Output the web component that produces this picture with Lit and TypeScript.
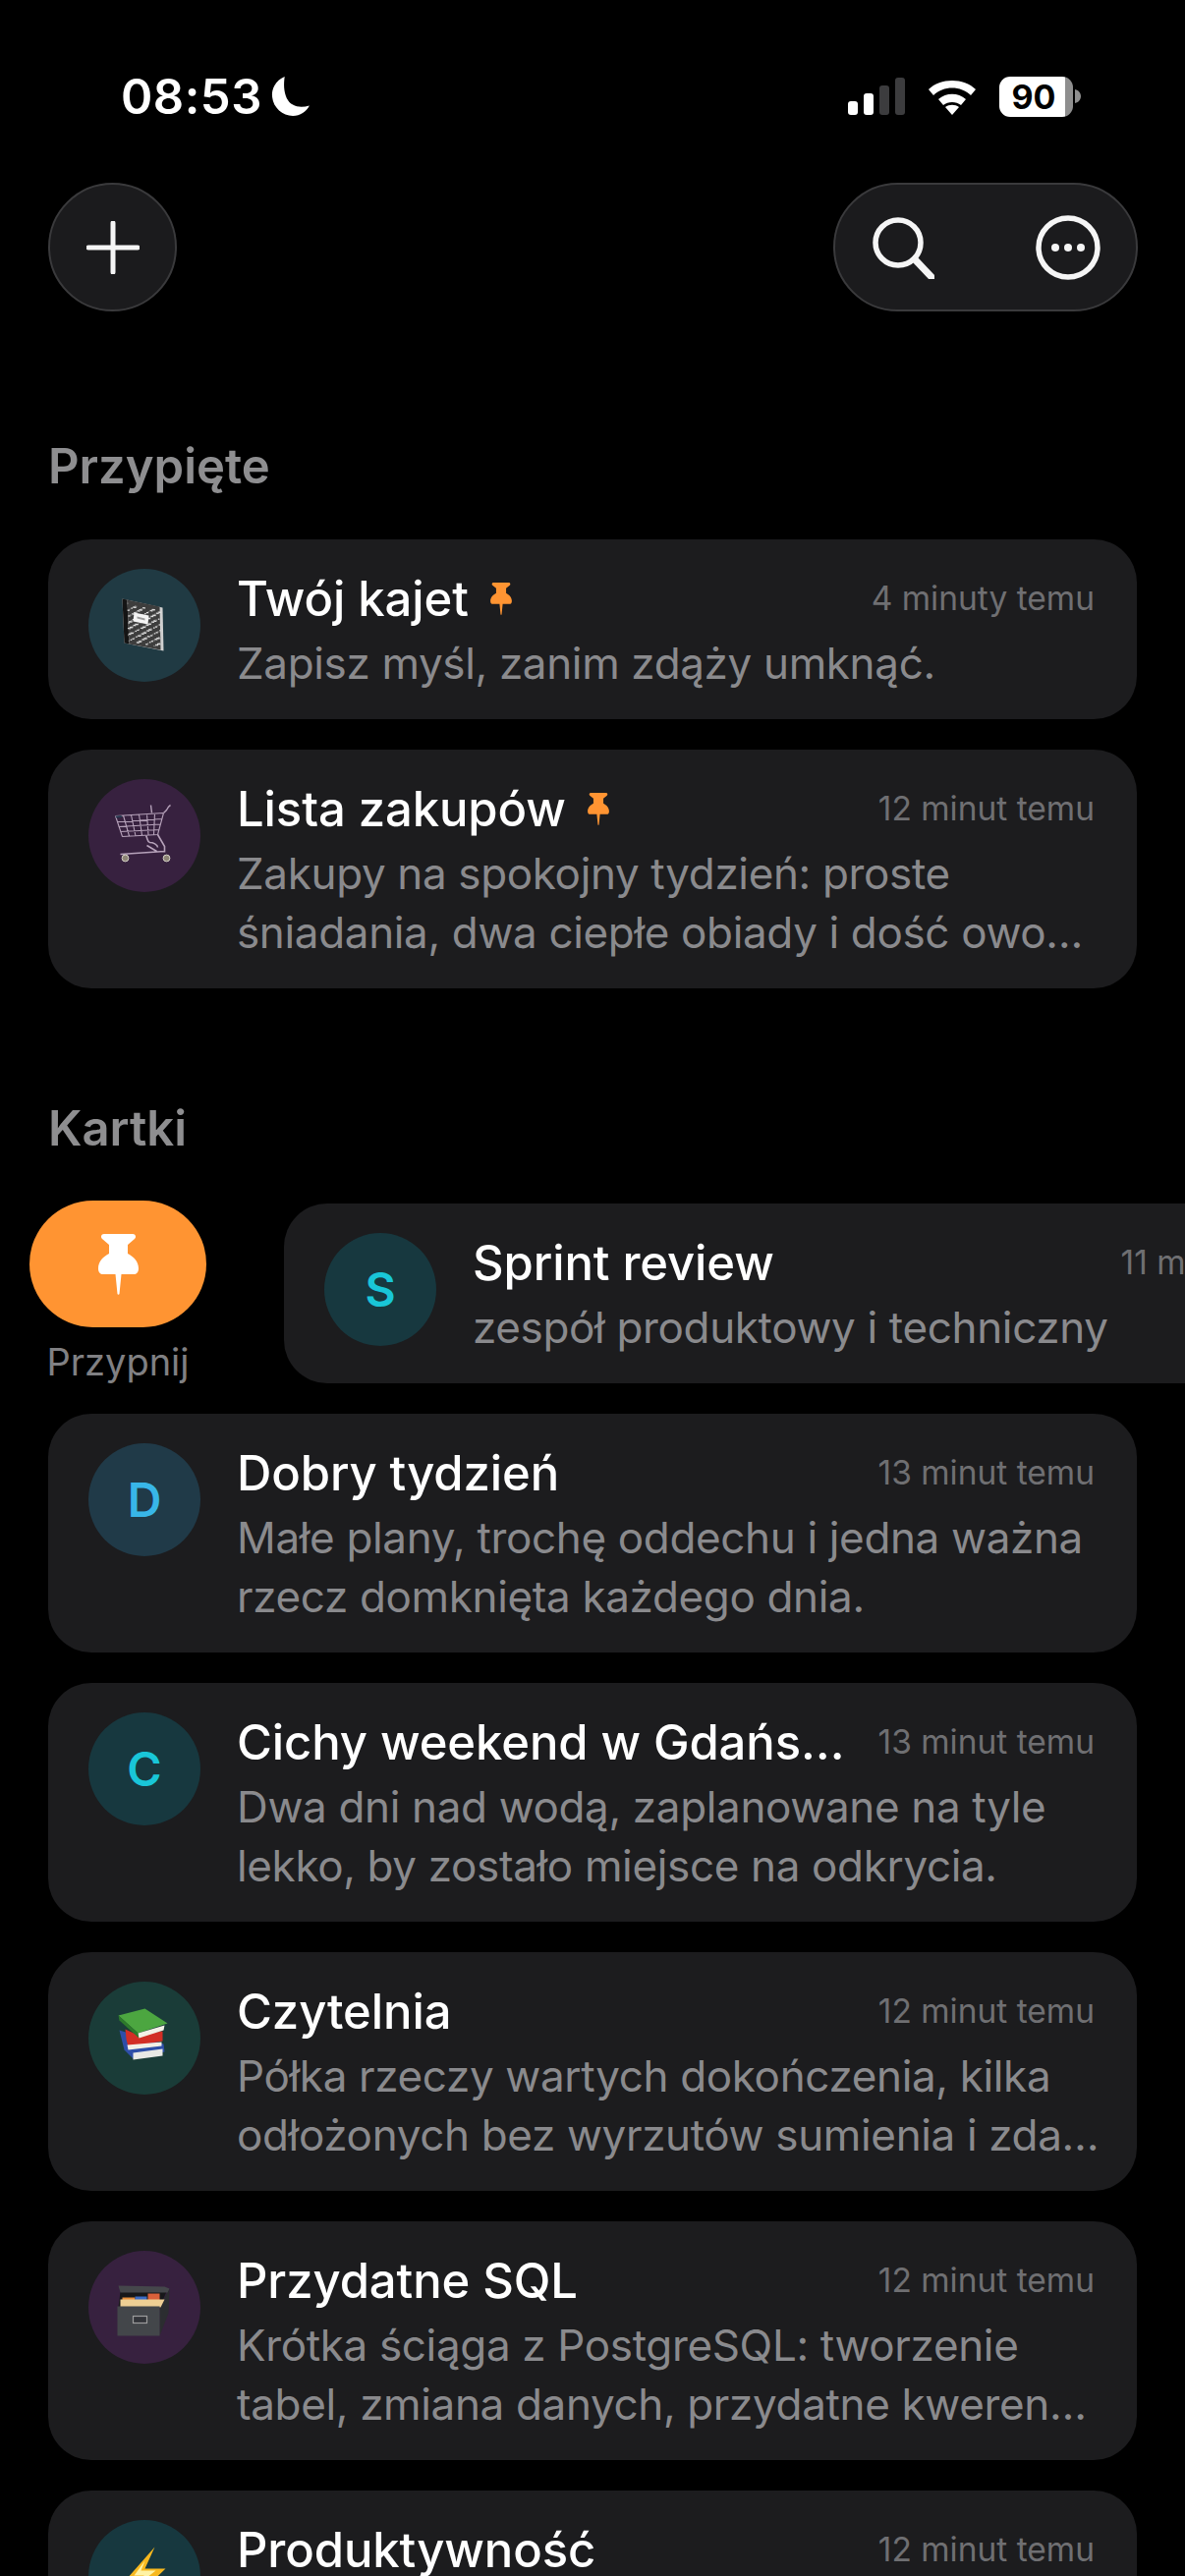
import { LitElement, html, css, svg } from 'lit';
import { customElement } from 'lit/decorators.js';

const pinPath =
  'M6 0H35c3 0 4 3 2 5l-7 6v9c6 3 11 8 11 15 0 4-2 6-5 6H23.500l-2 20c-.2 1-1.800 1-2 0l-2-20H5c-3 0-5-2-5-6 0-7 5-12 11-15v-9L4 5C2 3 3 0 6 0z';

// speckles for the marbled notebook cover, fixed sequence so it never changes between runs
const specks = Array.from({ length: 170 }, (_, i) => {
  const u = (i * 0.618034) % 1;
  const v = (i * 0.754878) % 1;
  const x = 19 + u * 33;
  const y = 14 + u * 8 + v * 38;
  const light = i % 3 !== 0;
  return svg`<rect x=${x} y=${y} width=${1 + (i % 3) * 0.6} height="1.300" fill=${light ? '#dcdcdc' : '#8a8a8a'} />`;
});

const notebook = svg`
  <path d="M14 10l41 9 1 44-40-8z" fill="#d0d0d0" />
  <path d="M14 10l5 1 2 45-5-1z" fill="#141414" />
  <path d="M19 11l33 7 1 44-32-6z" fill="#3d3d3d" />
  ${specks}
  <path d="M26 24l15 3-1 9-15-3z" fill="#f4f4f4" />
  <path d="M29 28l8 2v2l-8-2z" fill="#9b9b9b" />
`;

const cart = svg`
  <g fill="none" stroke="#b6a2ba" stroke-width="1.100">
    <path d="M7 17l49-3M9 23l45-3M10 28l43-2.500M12 33l39-2M14 38l36-2M7 17l7 21M56 14l-6 22M15 16.500l6 21M23 16l4.500 21.500M31 15.500l3 21.500M39 15l1.500 21.500M47 14.500l-1 22" />
    <path d="M56 14l3-3c1-2 2-4 4-5M43 6l1 8" stroke-width="1.400" />
    <path d="M38 37c2 3 1 6 4 7 3 0 8 2 8 5M50 36l7 12v6M12 56l45-3M39 47l10 6" stroke-width="1.600" />
  </g>
  <circle cx="17" cy="60" r="3.400" fill="#8d8576" stroke="#d5d0c7" stroke-width="1" />
  <circle cx="59" cy="60" r="3.400" fill="#8d8576" stroke="#d5d0c7" stroke-width="1" />
  <path d="M7 17l6-.5.800 2-6 .5z" fill="#27384f" />
`;

const books = svg`
  <path d="M9 27l5 20 9 9 32-7-1-8z" fill="#2e4ea8" />
  <path d="M23 50l30-4v7l-30 4z" fill="#e9e9e6" />
  <path d="M15 26l13 6 25-4v10l-35 6-2-8z" fill="#d22e25" />
  <path d="M17 42l35-3v4l-34 4z" fill="#f2efe6" />
  <path d="M8 12L35 5l23 15-30 10z" fill="#4ca640" />
  <path d="M8 12l20 18 1 5L9 17z" fill="#2d7a2a" />
  <path d="M28 30l27-8-1 5-25 8z" fill="#f3f1e6" />
`;

const cardBox = svg`
  <path d="M50 33l10-18-1 25-9 23z" fill="#2b2d30" />
  <path d="M10 18h47l-7 16H8z" fill="#17181a" />
  <path d="M8 12l47 1 5 2-2 4H10z" fill="#45474b" />
  <rect x="12" y="24" width="13" height="6" fill="#e98f3a" />
  <rect x="25" y="23" width="12" height="6" fill="#3b6bc4" />
  <rect x="38" y="20" width="12" height="7" fill="#d9603a" />
  <path d="M10 26h45l-4 8H10z" fill="#eecf94" />
  <rect x="7" y="33" width="43" height="30" fill="#43464a" />
  <rect x="23" y="43" width="14" height="7" fill="#33353a" stroke="#9c9c9c" stroke-width="1.200" />
`;

const bolt = svg`
  <path d="M45 11L16 44h14l-6 20L56 33H35z" fill="#f7b81f" />
  <path d="M35 25L24 40h10l-2 6 14-11H31z" fill="#fff3a6" />
`;

type Note = {
  title: string;
  time: string;
  lines: string[];
  tint: string;
  letter?: string;
  letterColor?: string;
  art?: unknown;
  box?: string;
  pinned?: boolean;
};

const pinned: Note[] = [
  {
    title: 'Twój kajet',
    time: '4 minuty temu',
    lines: ['Zapisz myśl, zanim zdąży umknąć.'],
    tint: '#203a43',
    art: notebook,
    box: '1.5 2.5 70 70',
    pinned: true,
  },
  {
    title: 'Lista zakupów',
    time: '12 minut temu',
    lines: ['Zakupy na spokojny tydzień: proste', 'śniadania, dwa ciepłe obiady i dość owo…'],
    tint: '#37213f',
    art: cart,
    box: '1.5 2.5 70 70',
    pinned: true,
  },
];

const cards: Note[] = [
  {
    title: 'Dobry tydzień',
    time: '13 minut temu',
    lines: ['Małe plany, trochę oddechu i jedna ważna', 'rzecz domknięta każdego dnia.'],
    tint: '#203a48',
    letter: 'D',
    letterColor: '#38b6e8',
  },
  {
    title: 'Cichy weekend w Gdańs…',
    time: '13 minut temu',
    lines: ['Dwa dni nad wodą, zaplanowane na tyle', 'lekko, by zostało miejsce na odkrycia.'],
    tint: '#17383f',
    letter: 'C',
    letterColor: '#19c6d8',
  },
  {
    title: 'Czytelnia',
    time: '12 minut temu',
    lines: ['Półka rzeczy wartych dokończenia, kilka', 'odłożonych bez wyrzutów sumienia i zda…'],
    tint: '#1a3c38',
    art: books,
    box: '-.5 .5 70 70',
  },
  {
    title: 'Przydatne SQL',
    time: '12 minut temu',
    lines: ['Krótka ściąga z PostgreSQL: tworzenie', 'tabel, zmiana danych, przydatne kweren…'],
    tint: '#37213f',
    art: cardBox,
    box: '-.5 -.5 70 70',
  },
  {
    title: 'Produktywność',
    time: '12 minut temu',
    lines: [''],
    tint: '#17383f',
    art: bolt,
    box: '-.5 6.5 70 70',
  },
];

@customElement('app-root')
export class AppRoot extends LitElement {
  static styles = css`
    :host {
      display: block;
      width: 1206px;
      height: 2622px;
      overflow: hidden;
      background: #000;
      color: #fff;
      font-family: Inter, 'Noto Sans', sans-serif;
    }

    .status {
      display: flex;
      justify-content: space-between;
      align-items: center;
      height: 60px;
      padding: 68px 106px 0 123px;
    }
    .clock {
      display: flex;
      align-items: center;
      gap: 8px;
      font-size: 49px;
      font-weight: 600;
      letter-spacing: 0.5px;
    }
    .sys {
      display: flex;
      align-items: center;
      gap: 23px;
    }
    .battery {
      display: flex;
      align-items: center;
      gap: 2px;
    }
    .battery-body {
      width: 75px;
      height: 41px;
      border-radius: 11px;
      background: linear-gradient(90deg, #fff 90%, #8e8e8e 90%);
      color: #000;
      font-size: 34px;
      font-weight: 700;
      line-height: 41px;
      text-align: center;
      padding-right: 5px;
      box-sizing: border-box;
    }

    .toolbar {
      display: flex;
      justify-content: space-between;
      padding: 58px 48px 0 49px;
    }
    .glass {
      display: flex;
      align-items: center;
      justify-content: center;
      height: 131px;
      border-radius: 66px;
      background: #1b1b1d;
      border: 2px solid #3a3a3c;
      box-sizing: border-box;
    }
    .glass.round {
      width: 131px;
    }
    .glass.pill {
      width: 310px;
      gap: 103px;
    }

    .label {
      font-size: 49px;
      font-weight: 600;
      color: #8e8e90;
      line-height: 60px;
      padding-left: 49px;
    }
    .label.first {
      margin-top: 128px;
    }
    .label.second {
      margin-top: 113px;
    }
    .stack {
      display: flex;
      flex-direction: column;
      gap: 31px;
      margin-top: 44px;
    }
    .stack.tight {
      margin-top: 46px;
    }

    .card {
      display: flex;
      gap: 37px;
      box-sizing: border-box;
      width: 1108px;
      margin-left: 49px;
      padding: 30px 43px 0 41px;
      border-radius: 44px;
      background: #1c1c1e;
      flex: none;
    }
    .card.lines-1 {
      height: 183px;
    }
    .card.lines-2 {
      height: 243px;
    }
    .avatar {
      flex: none;
      display: flex;
      align-items: center;
      justify-content: center;
      width: 114px;
      height: 115px;
      border-radius: 50%;
      font-size: 48px;
      font-weight: 600;
    }
    .body {
      flex: 1;
      min-width: 0;
    }
    .head {
      display: flex;
      align-items: center;
      justify-content: space-between;
      height: 60px;
    }
    .title {
      display: flex;
      align-items: center;
      gap: 22px;
      font-size: 49px;
      font-weight: 500;
      letter-spacing: -0.1px;
      white-space: nowrap;
    }
    .time {
      font-size: 33.500px;
      color: #6f6f72;
      white-space: nowrap;
    }
    .lines {
      margin-top: 6px;
    }
    .text {
      font-size: 44px;
      line-height: 60px;
      letter-spacing: -0.35px;
      color: #8a8a8d;
      white-space: nowrap;
    }

    .swipe {
      display: flex;
      align-items: flex-start;
    }
    .action {
      flex: none;
      display: flex;
      flex-direction: column;
      align-items: center;
      width: 180px;
      margin-left: 30px;
      margin-top: -3px;
    }
    .action-btn {
      display: flex;
      align-items: center;
      justify-content: center;
      width: 100%;
      height: 129px;
      border-radius: 65px;
      background: #ff9432;
    }
    .action-label {
      font-size: 38px;
      line-height: 42px;
      margin-top: 14px;
      color: #808083;
    }
    .swipe .card {
      margin-left: 79px;
    }
  `;

  private pin(w: number, h: number, fill: string) {
    return html`<svg width=${w} height=${h} viewBox="0 0 41 62">
      <path d=${pinPath} fill=${fill} />
    </svg>`;
  }

  private note(n: Note) {
    return html`
      <div class="card lines-${n.lines.length}">
        <div class="avatar" style="background:${n.tint};color:${n.letterColor ?? '#fff'}">
          ${n.letter ?? html`<svg width="70" height="70" viewBox=${n.box ?? '0 0 70 70'}>${n.art}</svg>`}
        </div>
        <div class="body">
          <div class="head">
            <div class="title">${n.title}${n.pinned ? this.pin(22, 33, '#ff9432') : ''}</div>
            <div class="time">${n.time}</div>
          </div>
          <div class="lines">${n.lines.map((l) => html`<div class="text">${l}</div>`)}</div>
        </div>
      </div>
    `;
  }

  render() {
    return html`
      <div class="status">
        <div class="clock">
          08:53
          <svg width="42" height="42" viewBox="0 0 40 40">
            <path d="M14 1C5 5 1 13 2 21c1 10 10 18 20 18 7 0 13-4 16-10-9 3-18 1-22-7-3-7-3-14-2-21z" fill="#fff" />
          </svg>
        </div>
        <div class="sys">
          <svg width="58" height="38" viewBox="0 0 58 38">
            <rect x="0" y="24" width="10" height="14" rx="3" fill="#fff" />
            <rect x="16" y="16" width="10" height="22" rx="3" fill="#fff" />
            <rect x="32" y="8" width="10" height="30" rx="3" fill="#3c3c3e" />
            <rect x="48" y="0" width="10" height="38" rx="3" fill="#3c3c3e" />
          </svg>
          <svg width="50" height="38" viewBox="0 0 50 38">
            <path d="M1 12C13 0 37 0 49 12l-5 6C34 8 16 8 6 18z" fill="#fff" />
            <path d="M11 22c8-7 20-7 28 0l-5 6c-5-4-13-4-18 0z" fill="#fff" />
            <path d="M18 30c4-3 10-3 14 0l-7 8z" fill="#fff" />
          </svg>
          <div class="battery">
            <div class="battery-body">90</div>
            <svg width="6" height="14" viewBox="0 0 6 14"><path d="M0 0c4 1 6 4 6 7s-2 6-6 7z" fill="#8e8e8e" /></svg>
          </div>
        </div>
      </div>

      <div class="toolbar">
        <div class="glass round">
          <svg width="54" height="54" viewBox="0 0 54 54">
            <path d="M27 2v50M2 27h50" stroke="#f5f5f5" stroke-width="5" stroke-linecap="round" />
          </svg>
        </div>
        <div class="glass pill">
          <svg width="64" height="64" viewBox="0 0 64 64" fill="none" stroke="#f5f5f5" stroke-width="5.500" stroke-linecap="round">
            <circle cx="27" cy="27" r="23" />
            <path d="M44 44l17 18" stroke-width="7" />
          </svg>
          <svg width="66" height="66" viewBox="0 0 66 66">
            <circle cx="33" cy="33" r="30" fill="none" stroke="#f5f5f5" stroke-width="5.500" />
            <circle cx="20" cy="33" r="4" fill="#f5f5f5" />
            <circle cx="33" cy="33" r="4" fill="#f5f5f5" />
            <circle cx="46" cy="33" r="4" fill="#f5f5f5" />
          </svg>
        </div>
      </div>

      <div class="label first">Przypięte</div>
      <div class="stack">${pinned.map((n) => this.note(n))}</div>

      <div class="label second">Kartki</div>
      <div class="stack tight">
        <div class="swipe">
          <div class="action">
            <div class="action-btn">${this.pin(41, 62, '#fff')}</div>
            <div class="action-label">Przypnij</div>
          </div>
          ${this.note({
            title: 'Sprint review',
            time: '11 minut temu',
            lines: ['zespół produktowy i techniczny'],
            tint: '#17383f',
            letter: 'S',
            letterColor: '#19c6d8',
          })}
        </div>
        ${cards.map((n) => this.note(n))}
      </div>
    `;
  }
}
